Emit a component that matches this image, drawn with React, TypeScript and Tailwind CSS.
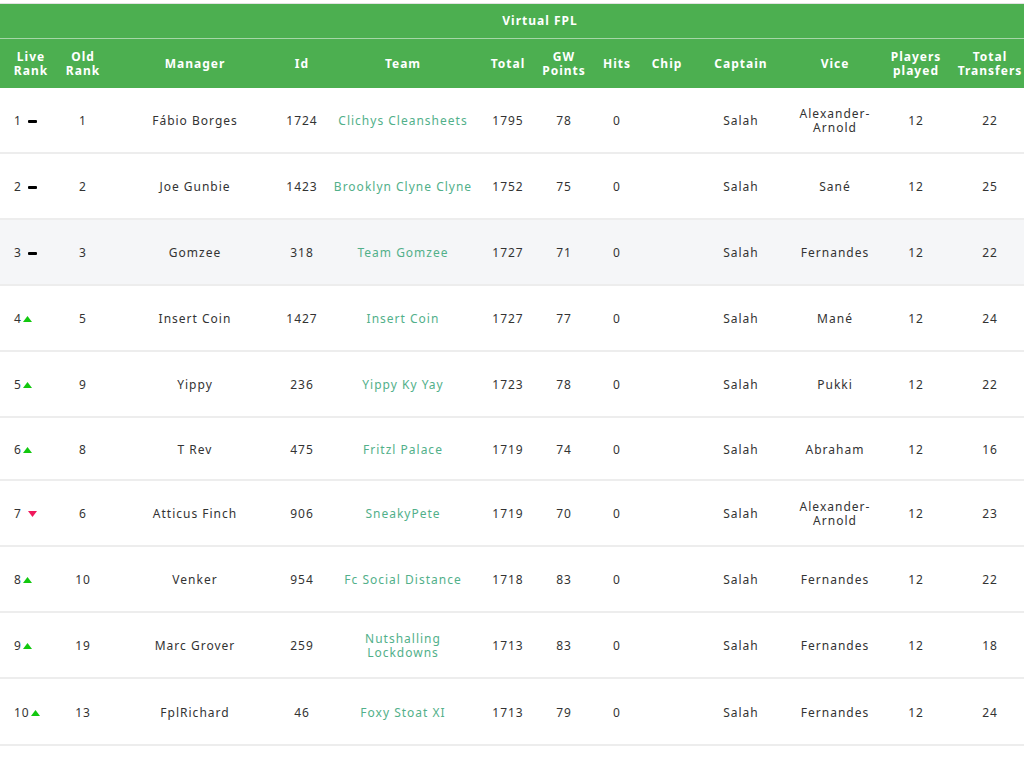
import React from "react";

type Trend = "same" | "up" | "down";
type Row = {
  live: string;
  trend: Trend;
  old: string;
  manager: string;
  id: string;
  team: string;
  total: string;
  gw: string;
  hits: string;
  captain: string;
  vice: string;
  played: string;
  transfers: string;
  h: string;
  bg?: string;
};

const rows: Row[] = [
  { live: "1", trend: "same", old: "1", manager: "Fábio Borges", id: "1724", team: "Clichys Cleansheets", total: "1795", gw: "78", hits: "0", captain: "Salah", vice: "Alexander-\nArnold", played: "12", transfers: "22", h: "h-[66px]" },
  { live: "2", trend: "same", old: "2", manager: "Joe Gunbie", id: "1423", team: "Brooklyn Clyne Clyne", total: "1752", gw: "75", hits: "0", captain: "Salah", vice: "Sané", played: "12", transfers: "25", h: "h-[66px]" },
  { live: "3", trend: "same", old: "3", manager: "Gomzee", id: "318", team: "Team Gomzee", total: "1727", gw: "71", hits: "0", captain: "Salah", vice: "Fernandes", played: "12", transfers: "22", h: "h-[66px]", bg: "bg-[#f5f6f8]" },
  { live: "4", trend: "up", old: "5", manager: "Insert Coin", id: "1427", team: "Insert Coin", total: "1727", gw: "77", hits: "0", captain: "Salah", vice: "Mané", played: "12", transfers: "24", h: "h-[66px]" },
  { live: "5", trend: "up", old: "9", manager: "Yippy", id: "236", team: "Yippy Ky Yay", total: "1723", gw: "78", hits: "0", captain: "Salah", vice: "Pukki", played: "12", transfers: "22", h: "h-[66px]" },
  { live: "6", trend: "up", old: "8", manager: "T Rev", id: "475", team: "Fritzl Palace", total: "1719", gw: "74", hits: "0", captain: "Salah", vice: "Abraham", played: "12", transfers: "16", h: "h-[63px]" },
  { live: "7", trend: "down", old: "6", manager: "Atticus Finch", id: "906", team: "SneakyPete", total: "1719", gw: "70", hits: "0", captain: "Salah", vice: "Alexander-\nArnold", played: "12", transfers: "23", h: "h-[66px]" },
  { live: "8", trend: "up", old: "10", manager: "Venker", id: "954", team: "Fc Social Distance", total: "1718", gw: "83", hits: "0", captain: "Salah", vice: "Fernandes", played: "12", transfers: "22", h: "h-[66px]" },
  { live: "9", trend: "up", old: "19", manager: "Marc Grover", id: "259", team: "Nutshalling\nLockdowns", total: "1713", gw: "83", hits: "0", captain: "Salah", vice: "Fernandes", played: "12", transfers: "18", h: "h-[66px]" },
  { live: "10", trend: "up", old: "13", manager: "FplRichard", id: "46", team: "Foxy Stoat XI", total: "1713", gw: "79", hits: "0", captain: "Salah", vice: "Fernandes", played: "12", transfers: "24", h: "h-[67px]" },
];

const cols =
  "grid grid-cols-[62px_42px_182px_32px_170px_40px_72px_34px_66px_82px_106px_56px_92px]";

function TrendIcon({ t }: { t: Trend }) {
  if (t === "same")
    return <span className="ml-[6px] inline-block h-[3px] w-[9px] rounded-[1px] bg-black" />;
  if (t === "up")
    return (
      <svg width="9" height="6" viewBox="0 0 9 6" className="ml-[1px] inline-block">
        <polygon points="4.5,0 9,6 0,6" fill="#12c80f" />
      </svg>
    );
  return (
    <svg width="9" height="6" viewBox="0 0 9 6" className="ml-[6px] inline-block">
      <polygon points="0,0 9,0 4.5,6" fill="#f0195c" />
    </svg>
  );
}

const headers = [
  "Live\nRank",
  "Old\nRank",
  "Manager",
  "Id",
  "Team",
  "Total",
  "GW\nPoints",
  "Hits",
  "Chip",
  "Captain",
  "Vice",
  "Players\nplayed",
  "Total\nTransfers",
];

export default function App() {
  return (
    <div
      className="w-[1024px] h-[757px] overflow-hidden bg-white text-[12px] tracking-[1px] text-[#333]"
      style={{ fontFamily: '"Noto Sans", "Open Sans", sans-serif' }}
    >
      <div className="w-[1036px] pt-[3px]">
        <div className="border-t border-[#e2e2e2] bg-[#4caf50] text-white font-bold">
          <div className="flex h-[35px] items-center justify-center pl-[44px] border-b border-[#a5d6a7]">
            Virtual FPL
          </div>
          <div className={`${cols} h-[49px] items-center text-center leading-[14px]`}>
            {headers.map((h, i) => (
              <div key={i} className="whitespace-pre-line">
                {h}
              </div>
            ))}
          </div>
        </div>
        {rows.map((r, i) => (
          <div
            key={i}
            className={`${cols} ${r.h} ${r.bg ?? "bg-white"} items-center pt-[2px] text-center leading-[14px] border-b-2 border-[#ededed]`}
          >
            <div className="flex items-center pl-[14px]">
              <span>{r.live}</span>
              <TrendIcon t={r.trend} />
            </div>
            <div>{r.old}</div>
            <div>{r.manager}</div>
            <div>{r.id}</div>
            <div className="whitespace-pre-line text-[#52b08a]">{r.team}</div>
            <div>{r.total}</div>
            <div>{r.gw}</div>
            <div>{r.hits}</div>
            <div></div>
            <div>{r.captain}</div>
            <div className="whitespace-pre-line">{r.vice}</div>
            <div>{r.played}</div>
            <div>{r.transfers}</div>
          </div>
        ))}
      </div>
    </div>
  );
}
